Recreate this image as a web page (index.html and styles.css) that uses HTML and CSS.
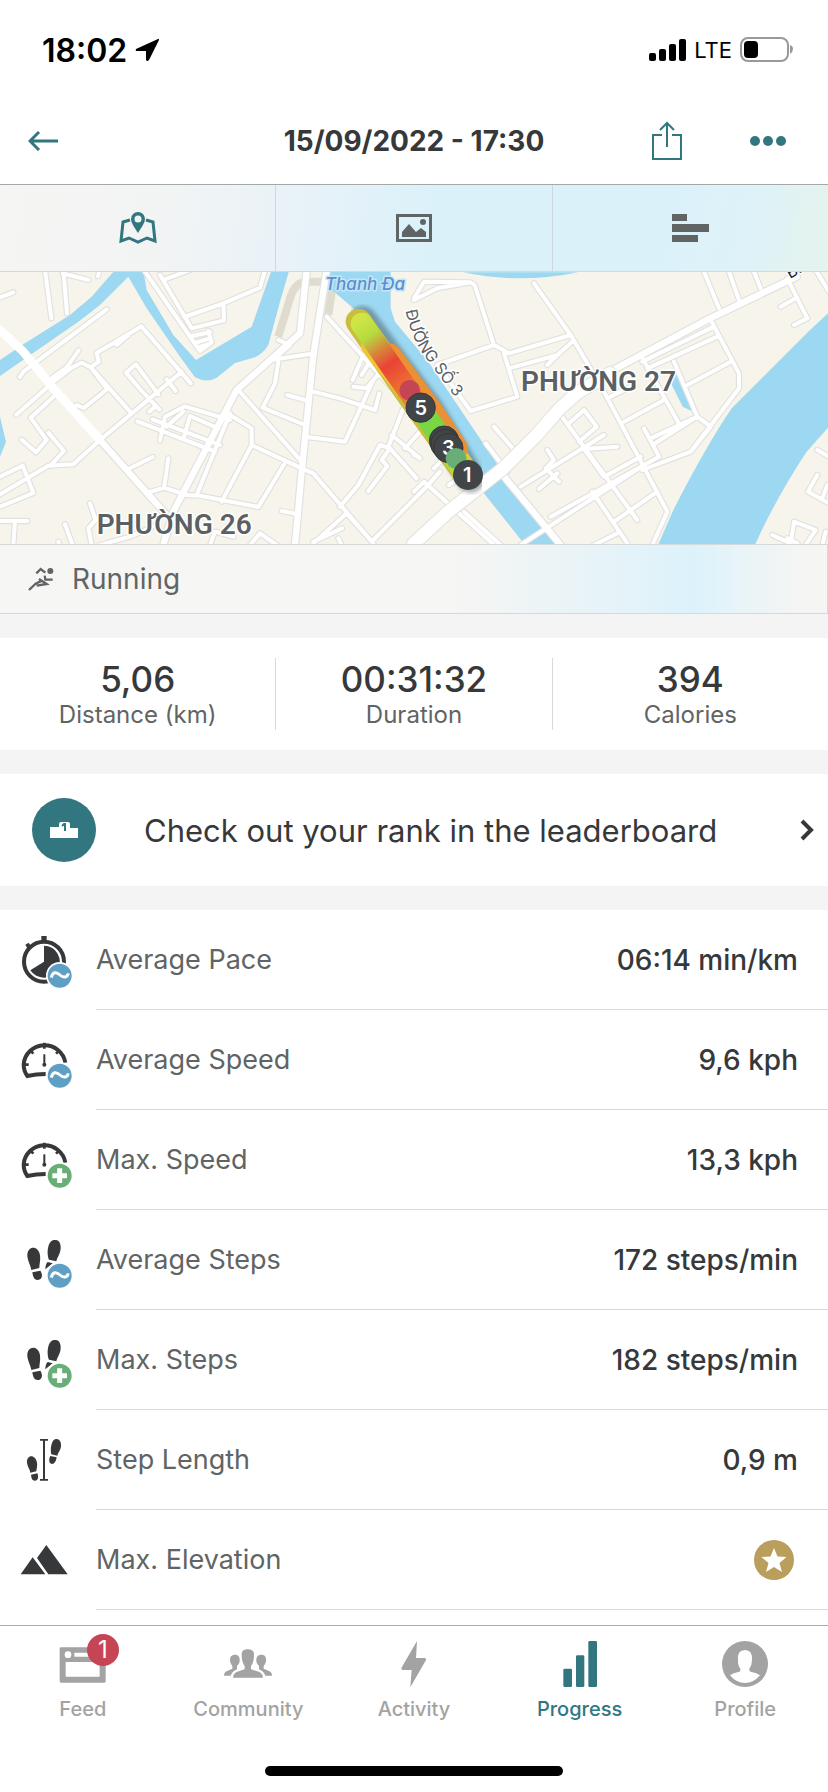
FILE: index.html
```
<!DOCTYPE html>
<html lang="en">
<head>
    <meta charset="UTF-8">
    <meta name="viewport" content="width=device-width, initial-scale=1.0">
    <title>Workout details</title>
    <link rel="stylesheet" href="styles.css">
</head>
<body>
    <!-- shared icon parts -->
    <svg class="defs" width="0" height="0" aria-hidden="true">
        <symbol id="gauge" viewBox="60 60 162 180">
            <path d="M196 158A63 62 0 0 0 71 163Q71 184 82 198Q108 192 137 192" fill="none" stroke="#363839" stroke-width="12"/>
            <path d="M133 98V116M72 164H86M91 121L100 131M178 121L168 131" stroke="#363839" stroke-width="8"/>
            <path d="M133 133V168" stroke="#363839" stroke-width="6"/>
            <circle cx="133" cy="164" r="6" fill="#363839"/>
        </symbol>
        <symbol id="feet" viewBox="60 60 162 180">
            <path d="M82 138C80 106 116 104 120 136C122 152 118 162 118 174L94 180C92 166 84 156 82 138ZM97 187L121 182C130 196 126 210 113 210C101 209 99 199 97 187Z" fill="#363839"/>
            <path d="M182 110C183 130 172 140 169 154L147 149C139 130 143 92 162 90C175 88 181 96 182 110ZM143 156L158 160L136 178Q136 163 143 156Z" fill="#363839"/>
        </symbol>
        <symbol id="badge-avg" viewBox="60 60 162 180">
            <circle cx="179" cy="197" r="41" fill="#fff"/>
            <circle cx="179" cy="197" r="36" fill="#609fc4"/>
            <path d="M154 203C158 184 170 186 180 195C190 204 202 203 205 190" fill="none" stroke="#fff" stroke-width="9"/>
        </symbol>
        <symbol id="badge-max" viewBox="60 60 162 180">
            <circle cx="179" cy="197" r="41" fill="#fff"/>
            <circle cx="179" cy="197" r="36" fill="#69ae76"/>
            <path d="M179 175V219M157 197H201" stroke="#fff" stroke-width="15"/>
        </symbol>
    </svg>

    <div class="status-bar">
        <div class="status-left">
            <span class="clock">18:02</span>
            <svg width="24" height="24" viewBox="0 0 24 24"><path d="M23 1L1 11Q0 13 2 13L11 13L11 22Q12 24 14 22L24 2Q24 0 23 1Z"/></svg>
        </div>
        <div class="status-right">
            <svg width="37" height="24" viewBox="0 0 37 24"><rect y="15" width="7" height="8" rx="2"/><rect x="10" y="11" width="7" height="12" rx="2"/><rect x="20" y="6" width="7" height="17" rx="2"/><rect x="30" y="1" width="7" height="22" rx="2"/></svg>
            <span class="network">LTE</span>
            <svg width="54" height="26" viewBox="0 0 54 26"><rect x="1" y="1" width="47" height="23" rx="7" fill="none" stroke="#999" stroke-width="2"/><rect x="4" y="4" width="14" height="17" rx="4"/><path d="M50 8Q53 9 53 12T50 17Z" fill="#999"/></svg>
        </div>
    </div>

    <header class="header">
        <button class="icon-button back" aria-label="Back">
            <svg width="30" height="20" viewBox="0 0 30 20"><path d="M30 10H3M11 1L2 10L11 19" fill="none" stroke="#327780" stroke-width="3"/></svg>
        </button>
        <h1 class="title">15/09/2022 - 17:30</h1>
        <div class="header-actions">
            <button class="icon-button" aria-label="Share">
                <svg width="30" height="40" viewBox="0 0 30 40"><path d="M10 14H1V38H29V14H20M15 26V2M8 9L15 2L22 9" fill="none" stroke="#327780" stroke-width="2"/></svg>
            </button>
            <button class="icon-button" aria-label="More">
                <svg width="36" height="10" viewBox="0 0 36 10"><g fill="#327780"><circle cx="5" cy="5" r="5"/><circle cx="18" cy="5" r="5"/><circle cx="31" cy="5" r="5"/></g></svg>
            </button>
        </div>
    </header>

    <div class="view-tabs">
        <button class="view-tab" aria-label="Map">
            <svg width="38" height="34" viewBox="0 0 38 34"><path d="M11 9L4 11L2 30L10 27L19 31L28 27L36 30L34 11L27 9" fill="none" stroke="#327780" stroke-width="3"/><path fill-rule="evenodd" d="M19 1A7 7 0 0 1 26 8C26 12 22 17 19 22C16 17 12 12 12 8A7 7 0 0 1 19 1ZM19 4.500A3.500 3.500 0 1 0 19 11.500A3.500 3.500 0 1 0 19 4.500Z" fill="#327780"/></svg>
        </button>
        <button class="view-tab" aria-label="Photos">
            <svg width="36" height="28" viewBox="0 0 36 28"><rect x="1.500" y="1.500" width="33" height="25" fill="none" stroke="#616464" stroke-width="3"/><path d="M6 23V18L13 10L20 18L25 14L30 18V23Z" fill="#616464"/><circle cx="27" cy="8" r="3" fill="#616464"/></svg>
        </button>
        <button class="view-tab" aria-label="Charts">
            <svg width="37" height="28" viewBox="0 0 37 28"><path d="M0 0H15V7H0ZM0 10H37V18H0ZM0 21H26V28H0Z" fill="#616464"/></svg>
        </button>
    </div>

    <svg class="map" viewBox="0 21 2484 816" role="img" aria-label="Route map">
        <defs>
            <linearGradient id="heat" gradientUnits="userSpaceOnUse" x1="1075" y1="165" x2="1405" y2="640">
                <stop offset="0" stop-color="#d0e545"/>
                <stop offset=".1" stop-color="#b5dc40"/>
                <stop offset=".2" stop-color="#d9813a"/>
                <stop offset=".28" stop-color="#e94335"/>
                <stop offset=".42" stop-color="#ed7032"/>
                <stop offset=".52" stop-color="#eb8a32"/>
                <stop offset=".58" stop-color="#7cd641"/>
                <stop offset=".74" stop-color="#79d644"/>
                <stop offset="1" stop-color="#c7e03a"/>
            </linearGradient>
            <filter id="soft"><feGaussianBlur stdDeviation="7"/></filter>

            <path id="roads-small" d="M135 15L154 160M190 15L201 145M188 25L265 45M300 10L294 34M0 97L40 82M60 336L70 320L320 133M140 350L200 307L236 256M145 362L215 308L245 293L272 307L322 372L252 429L230 420L215 433M48 450L150 360L172 385L92 458L140 525L108 562L65 524M145 503L192 558L150 603
                M272 307L296 290L290 263L345 232L424 184L572 355M350 240L385 210M275 310L390 440M300 525L545 320M500 343L527 378M478 434L420 372L378 323L408 298L475 388M448 440L465 425
                M300 525L220 598L145 602L0 688M0 635L68 602L100 684L0 725M385 612L458 576M505 580L492 670M440 684L492 668L560 690L600 692L775 726L852 598M270 715L287 765L265 790L275 840M0 768L82 768M45 768L40 840M195 778L218 840M175 830L178 840M300 840L390 815L470 780
                M435 20L575 222L600 258L635 232L625 198M480 30L575 190L672 166L670 120M553 156L670 115L780 68L795 15M490 45L570 15M575 213L630 202M590 232L630 220M600 246L630 236
                M412 469L645 560M458 463L660 540M480 527L495 455L555 424L690 465M550 523L570 453L655 490M500 485L550 440M715 375L905 590M690 445L590 690M690 450L755 490L755 540L665 710M755 540L905 610L940 625L1120 835M812 285L945 265M835 290L825 355L788 428L915 480M862 390L925 408L932 378L1020 400L1125 435L1138 385M927 517L1035 530L1120 345L1100 370L1060 365M1120 345L1160 300M1058 345L1090 270M1085 330L1110 290L1160 240M835 225L870 240L820 285M980 155L1190 385M845 738L895 748M630 840L645 800L700 815M780 805L750 840M780 805L830 840M940 830L1026 790M1015 820L1025 840M1020 725L1075 660L1140 540L1170 550L1145 585L1162 603L1105 678M1165 545L1250 640M1210 430L1165 545M1175 510L1260 580M1215 550L1260 500M940 835L1040 745L1120 835M1120 825L1280 665L1320 620"/>
            <path id="roads-right" d="M0 105L70 70L170 52L182 60L240 240L285 265L470 210L360 55M0 100L30 50L170 52M70 300L240 240M270 265L310 395L170 438L70 300M285 310L430 270L475 230M400 300L430 270
                M470 210L570 380L760 740L715 840M680 270L800 485M580 400L660 360M630 470L750 405M710 520L850 455L780 290M715 540L850 455L890 485L830 560L685 615M690 490L735 575L410 755M535 680L640 835M440 450L670 765M465 475L510 435L548 485L495 530M320 665L570 510M510 552L610 545M510 552L570 635L680 575M400 555L420 585L395 610L435 650M375 672L430 625M690 600L320 840M600 770L730 680M540 690L690 600M540 840L610 805M240 485L305 560M215 535L280 620
                M890 165L975 325L975 370L830 560M685 290L900 185M700 310L910 215M820 360L950 290M870 20L915 130M945 20L975 105M1020 20L1040 70M1120 40L1180 160L1140 180M1145 100L1100 125M1205 15L1245 80M1210 630L1182 680L1245 715M1210 555L1245 575M1225 700L1240 660M1075 810L1130 835L1140 770L1205 795L1175 840M1120 820L1150 835M1235 800L1225 840M0 680L30 650L240 840M150 740L260 840M0 570L12 575M60 610L80 590M105 660L140 635"/>
            <path id="roads-mid" d="M920 15L900 205L710 375L520 740L490 840M980 15L940 270L905 620L885 840M300 525L500 750M1820 325L2130 160L2390 35M1500 620L1690 850"/>
            <path id="roads-big" d="M0 195L70 260L160 370L300 525"/>
        </defs>
        <rect y="21" width="2484" height="816" fill="#f7f4eb"/>
        <path d="M835 215L870 100Q885 50 920 50H1000L985 150" fill="none" stroke="#dfdccf" stroke-width="24"/>

        <!-- rivers and canals -->
        <g fill="#9cd8f1">
            <path d="M345 15H430L440 75L520 210L588 285L755 185L785 100L815 15H868L840 110L805 240Q790 265 765 277L705 294L650 338Q620 355 585 337L540 275L440 130L385 35L300 120L235 170L0 333V285L70 238L210 150L275 95Z"/>
            <path d="M985 15H1172V130L1185 170L1285 290L1500 610L1675 850H1583L1440 670L1180 300L1060 130L990 70Z"/>
            <path d="M0 455L18 530L0 575ZM1390 22Q1560 58 1735 22ZM2008 345L2030 328L2083 442L2048 425Z"/>
            <path d="M2484 145L2420 205L2300 325L2195 430Q2120 540 2020 735L1970 850H2260Q2330 695 2420 560L2484 488Z"/>
        </g>

        <g fill="none" stroke-linecap="round" stroke-linejoin="round">
            <g stroke="#e1e1df">
                <use href="#roads-small" stroke-width="19"/>
                <use href="#roads-right" x="1242" stroke-width="19"/>
                <use href="#roads-mid" stroke-width="26"/>
            </g>
            <g stroke="#fff">
                <use href="#roads-small" stroke-width="12"/>
                <use href="#roads-right" x="1242" stroke-width="12"/>
                <use href="#roads-mid" stroke-width="19"/>
                <use href="#roads-big" stroke-width="26"/>
            </g>
            <path d="M1240 837L1345 740L1510 610L1610 510L1680 430L1730 385L1830 325" stroke="#e1e1df" stroke-width="44"/>
            <path d="M1240 837L1345 740L1510 610L1610 510L1680 430L1730 385L1830 325" stroke="#fff" stroke-width="38"/>
        </g>

        <g class="map-labels">
            <text class="water-label" x="975" y="74">Thanh Đa</text>
            <text class="ward-label" x="290" y="808">PHƯỜNG 26</text>
            <text class="ward-label" x="1563" y="379">PHƯỜNG 27</text>
            <path id="street" d="M1217 137Q1230 205 1265 262L1420 470" fill="none"/>
            <text class="street-label"><textPath href="#street">ĐƯỜNG SỐ 3</textPath></text>
            <text class="street-label street-dark" x="2370" y="42" transform="rotate(-30 2370 42)">B.</text>
        </g>

        <!-- recorded route -->
        <g fill="none" stroke-linecap="round">
            <path d="M1088 166L1290 435L1412 640" stroke="#3d4d55" stroke-width="86" opacity=".45" filter="url(#soft)"/>
            <path d="M1076 170L1225 385L1400 630" stroke="#c9bd3d" stroke-width="78"/>
            <path d="M1120 240L1250 405L1402 628" stroke="#f2c531" stroke-width="74"/>
            <path d="M1170 270L1290 430L1370 550" stroke="#ea9035" stroke-width="68"/>
            <path d="M1085 176L1230 385L1400 630" stroke="url(#heat)" stroke-width="66"/>
        </g>
        <circle cx="1229" cy="376" r="31" fill="#c54555"/>
        <g fill="#414548" stroke="#35383a" stroke-width="3">
            <circle cx="1262" cy="428" r="44"/>
            <circle cx="1332" cy="527" r="44"/>
            <circle cx="1336" cy="537" r="44"/>
            <circle cx="1345" cy="549" r="44"/>
        </g>
        <g class="km-labels">
            <text x="1262" y="449">5</text>
            <text x="1345" y="571">3</text>
        </g>
        <circle cx="1368" cy="580" r="31" fill="#69ae76"/>
        <circle cx="1404" cy="630" r="45" fill="#414548"/>
        <text class="km-labels" x="1402" y="652">1</text>
    </svg>

    <div class="activity">
        <svg width="30" height="30" viewBox="78 18 90 90"><path d="M109 46L122 33L136 44M87 96L107 77L126 68M117 63L140 78L110 83M134 53L136 65H158" fill="none" stroke="#616464" stroke-width="7"/><circle cx="151" cy="39" r="9" fill="#616464"/></svg>
        <span>Running</span>
    </div>

    <main class="content">
        <section class="stats">
            <div class="stat"><div class="stat-value">5,06</div><div class="stat-label">Distance (km)</div></div>
            <div class="stat"><div class="stat-value">00:31:32</div><div class="stat-label">Duration</div></div>
            <div class="stat"><div class="stat-value">394</div><div class="stat-label">Calories</div></div>
        </section>

        <a class="leaderboard" href="#">
            <span class="leaderboard-icon">
                <svg width="28" height="16" viewBox="0 0 28 16"><path d="M0 5H9V2Q9 0 11 0H18Q20 0 20 2V6H28V16H0Z" fill="#fff"/><path d="M12 4L14 2H15V9" fill="none" stroke="#327780" stroke-width="2"/></svg>
            </span>
            <span class="leaderboard-text">Check out your rank in the leaderboard</span>
            <svg width="14" height="22" viewBox="0 0 14 22"><path d="M2 2L11 11L2 20" fill="none" stroke="#363839" stroke-width="4"/></svg>
        </a>

        <ul class="details">
            <li class="detail">
                <svg class="detail-icon" viewBox="60 60 162 180">
                    <circle cx="132" cy="155" r="60" fill="none" stroke="#363839" stroke-width="12"/>
                    <path d="M124 78H140V92H124ZM76 104L86 98L94 110L84 118ZM132 155V107A48 48 0 1 1 91 181Z" fill="#363839"/>
                    <use href="#badge-avg" x="60" y="60" width="162" height="180"/>
                </svg>
                <div class="detail-row"><span>Average Pace</span><span class="detail-value">06:14 min/km</span></div>
            </li>
            <li class="detail">
                <svg class="detail-icon" viewBox="0 0 162 180"><use href="#gauge"/><use href="#badge-avg"/></svg>
                <div class="detail-row"><span>Average Speed</span><span class="detail-value">9,6 kph</span></div>
            </li>
            <li class="detail">
                <svg class="detail-icon" viewBox="0 0 162 180"><use href="#gauge"/><use href="#badge-max"/></svg>
                <div class="detail-row"><span>Max. Speed</span><span class="detail-value">13,3 kph</span></div>
            </li>
            <li class="detail">
                <svg class="detail-icon" viewBox="0 0 162 180"><use href="#feet"/><use href="#badge-avg"/></svg>
                <div class="detail-row"><span>Average Steps</span><span class="detail-value">172 steps/min</span></div>
            </li>
            <li class="detail">
                <svg class="detail-icon" viewBox="0 0 162 180"><use href="#feet"/><use href="#badge-max"/></svg>
                <div class="detail-row"><span>Max. Steps</span><span class="detail-value">182 steps/min</span></div>
            </li>
            <li class="detail">
                <svg class="detail-icon" viewBox="60 60 162 180" fill="#363839">
                    <path d="M81 158C79 132 107 132 111 158C113 169 109 176 109 184L91 188C90 178 82 170 81 158ZM93 194L112 190C117 202 114 212 105 212C96 212 94 203 93 194Z"/>
                    <path d="M183 105C184 120 174 126 172 137L154 133C150 118 154 88 168 87C179 86 183 96 183 105ZM151 138L170 142C168 154 164 162 156 162C146 160 146 148 151 138Z"/>
                    <path d="M120 87H144V92H135V207H144V212H120V207H129V92H120Z"/>
                </svg>
                <div class="detail-row"><span>Step Length</span><span class="detail-value">0,9 m</span></div>
            </li>
            <li class="detail">
                <svg class="detail-icon" viewBox="60 60 162 180" fill="#363839"><path d="M62 193L98 142L136 193ZM111 144L139 105L203 193H145Z"/></svg>
                <div class="detail-row">
                    <span>Max. Elevation</span>
                    <svg width="48" height="48" viewBox="0 0 48 48"><circle cx="24" cy="24" r="20" fill="#b99e5c"/><path d="M24 12L27.500 20.500L36.500 21L29.500 27L32 36L24 31L16 36L18.500 27L11.500 21L20.500 20.500Z" fill="#fff"/></svg>
                </div>
            </li>
        </ul>
    </main>

    <nav class="tab-bar">
        <a class="tab" href="#">
            <span class="tab-icon">
                <svg width="50" height="50" viewBox="172 87 150 150"><path fill-rule="evenodd" d="M181 112H311Q315 112 315 116V214Q315 218 311 218H181Q177 218 177 214V116Q177 112 181 112ZM195 156V200H297V156ZM221 128V140H300V128ZM202 124A10 10 0 1 0 202 144A10 10 0 1 0 202 124Z" fill="currentColor"/></svg>
                <span class="notification">1</span>
            </span>
            Feed
        </a>
        <a class="tab" href="#">
            <svg width="50" height="50" viewBox="669 87 150 150" fill="currentColor"><path d="M699 203Q700 188 716 184L734 178V168Q725 157 725 134Q724 118 743 118Q763 118 762 134Q762 157 753 168V178L772 184Q788 188 789 203Z"/><path d="M672 197Q672 185 683 182L697 176V168C687 157 686 134 705 134C718 134 721 145 718 158L711 169V178Q697 184 692 197ZM816 197Q816 185 805 182L791 176V168C801 157 802 134 785 134C770 134 767 145 770 158L777 169V178Q791 184 796 197Z"/></svg>
            Community
        </a>
        <a class="tab" href="#">
            <svg width="50" height="50" viewBox="1165 87 150 150"><path d="M1249 93L1202 174Q1201 179 1206 180H1233L1229 232L1276 150Q1278 145 1273 144H1246Z" fill="currentColor"/></svg>
            Activity
        </a>
        <a class="tab active" href="#">
            <svg width="50" height="50" viewBox="420 87 150 150" fill="currentColor"><rect x="445" y="176" width="26" height="55" rx="4"/><rect x="483" y="136" width="25" height="95" rx="4"/><rect x="520" y="93" width="26" height="138" rx="4"/></svg>
            Progress
        </a>
        <a class="tab" href="#">
            <svg width="50" height="50" viewBox="915 87 150 150"><circle cx="990" cy="162" r="69" fill="currentColor"/><path d="M945 196Q955 189 970 186Q978 184 976 176Q968 166 969 150Q966 120 990 120Q1013 120 1011 150Q1011 166 1003 176Q1002 184 1010 186Q1025 189 1035 196Q1016 219 990 219T945 196Z" fill="#fff"/></svg>
            Profile
        </a>
    </nav>
    <div class="home-indicator"></div>
</body>
</html>
```
FILE: styles.css
```
* {
    margin: 0;
    padding: 0;
    box-sizing: border-box;
}

body {
    font-family: Inter, "Liberation Sans", sans-serif;
    background-color: #fff;
    color: #363839;
    font-size: 28px;
    min-height: 100vh;
    display: flex;
    flex-direction: column;
}

button {
    background: none;
    border: none;
    font: inherit;
    cursor: pointer;
}

a {
    color: inherit;
    text-decoration: none;
}

svg {
    display: block;
    flex-shrink: 0;
}

.defs {
    position: absolute;
}

.status-bar {
    display: flex;
    justify-content: space-between;
    align-items: center;
    height: 100px;
    padding: 0 34px 0 42px;
    color: #000;
}

.status-left,
.status-right {
    display: flex;
    align-items: center;
    gap: 8px;
}

.clock {
    font-size: 32px;
    font-weight: 600;
}

.network {
    font-size: 22px;
}

.header {
    display: grid;
    grid-template-columns: 1fr auto 1fr;
    align-items: center;
    height: 85px;
    padding: 0 24px 2px;
    border-bottom: 1px solid #a3a8a8;
}

.icon-button {
    padding: 4px;
}

.back {
    justify-self: start;
}

.title {
    font-size: 28px;
    font-weight: 700;
}

.header-actions {
    display: flex;
    align-items: center;
    justify-content: flex-end;
    gap: 60px;
    padding-right: 14px;
}

.view-tabs {
    display: flex;
    height: 87px;
    border-bottom: 1px solid #d3d9db;
    background: linear-gradient(100deg, #f5f5f3 0%, #f2f4f4 20%, #e8f2f8 36%, #dbf1fa 52%, #daf1fa 75%, #def2f8 90%, #e5f3ec 100%);
}

.view-tab {
    flex: 1;
    display: flex;
    align-items: center;
    justify-content: center;
}

.view-tab + .view-tab {
    border-left: 1px solid #ccd9df;
}

.map {
    width: 100%;
    height: auto;
}

.map-labels text {
    paint-order: stroke;
    stroke: #fff;
    stroke-width: 9px;
    stroke-linejoin: round;
}

.water-label {
    font-size: 51px;
    font-style: italic;
    font-weight: 500;
    fill: #5b8fd0;
}

.map-labels .water-label {
    stroke: #c5e6f5;
}

.ward-label {
    font-family: "Liberation Sans Narrow", Roboto, sans-serif;
    font-size: 84px;
    font-weight: 600;
    fill: #5b6063;
}

.street-label {
    font-size: 48px;
    fill: #5b6063;
}

.street-dark {
    fill: #222;
}

.km-labels {
    font-size: 60px;
    font-weight: 600;
    fill: #fff;
    text-anchor: middle;
}

.activity {
    display: flex;
    align-items: center;
    gap: 16px;
    height: 70px;
    padding: 0 26px;
    border: 1px solid #d5d9da;
    border-left: none;
    color: #616464;
    background: linear-gradient(90deg, #f6f6f4 0%, #f6f6f4 55%, #ecf4f6 66%, #e4f3f9 76%, #dcf2fb 84%, #e9f4f8 90%, #f5f5f4 97%);
}

.content {
    flex: 1;
    display: flex;
    flex-direction: column;
    gap: 24px;
    padding-top: 24px;
    background-color: #f4f4f4;
}

.stats {
    display: flex;
    padding: 20px 0;
    background-color: #fff;
}

.stat {
    flex: 1;
    text-align: center;
}

.stat + .stat {
    border-left: 1px solid #d8d9d9;
}

.stat-value {
    font-size: 35px;
    line-height: 42px;
    font-weight: 500;
}

.stat-label {
    font-size: 24px;
    line-height: 30px;
    color: #616464;
}

.leaderboard {
    display: flex;
    align-items: center;
    padding: 24px 14px 24px 32px;
    background-color: #fff;
}

.leaderboard-icon {
    display: flex;
    align-items: center;
    justify-content: center;
    width: 64px;
    height: 64px;
    border-radius: 50%;
    background-color: #327780;
}

.leaderboard-text {
    flex: 1;
    margin-left: 48px;
    font-size: 31px;
}

.details {
    flex: 1;
    list-style: none;
    background-color: #fff;
}

.detail {
    display: flex;
    align-items: center;
    gap: 22px;
    padding-left: 20px;
}

.detail-icon {
    width: 54px;
    height: 60px;
}

.detail-row {
    flex: 1;
    display: flex;
    align-items: center;
    justify-content: space-between;
    height: 100px;
    padding-right: 30px;
    border-bottom: 1px solid #d8d9d9;
    font-size: 27px;
    color: #616464;
}

.detail-value {
    font-size: 28px;
    font-weight: 500;
    color: #363839;
}

.tab-bar {
    display: flex;
    margin-top: 15px;
    padding: 13px 0 45px;
    border-top: 1px solid #a9acac;
    background-color: #fff;
}

.tab {
    flex: 1;
    display: flex;
    flex-direction: column;
    align-items: center;
    gap: 8px;
    font-size: 20px;
    line-height: 24px;
    font-weight: 500;
    color: #a3a3a3;
}

.tab.active {
    color: #327780;
}

.tab-icon {
    position: relative;
}

.notification {
    position: absolute;
    top: -5px;
    right: -11px;
    width: 32px;
    height: 32px;
    border-radius: 50%;
    background-color: #c54555;
    color: #fff;
    font-size: 24px;
    font-weight: 400;
    line-height: 32px;
    text-align: center;
}

.home-indicator {
    align-self: center;
    width: 36%;
    height: 10px;
    margin-bottom: 16px;
    border-radius: 5px;
    background-color: #000;
}
```
